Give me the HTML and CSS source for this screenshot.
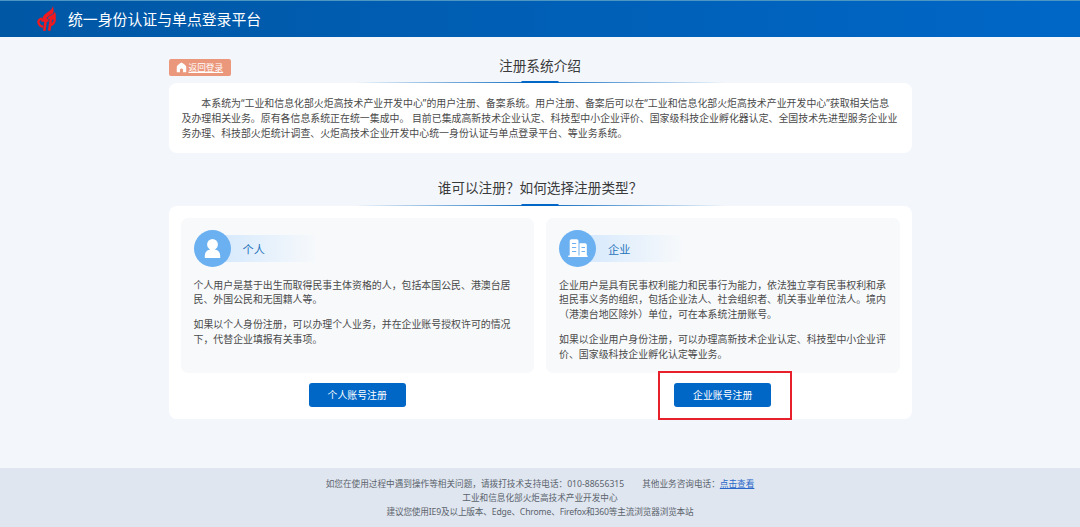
FILE: index.html
```
<!DOCTYPE html>
<html lang="zh-CN">

<head>
  <meta charset="UTF-8">
  <meta name="viewport" content="width=device-width, initial-scale=1.0">
  <title>统一身份认证与单点登录平台</title>
  <link rel="stylesheet" href="styles.css">
</head>

<body>
  <header class="header">
    <svg class="logo" viewBox="0 0 20 26">
      <path fill="#f0191f" d="M15.800 0C15.500 3.500 11.500 5.500 8.500 7.800C6.500 9.400 5.600 11 5.800 13H9.500C10 10.800 13 9.300 16 7.600C16.900 5.500 16.800 2.500 15.800 0Z" />
      <path fill="#f0191f" d="M17.800 5.500C17.300 8.200 14 9.300 11.500 10.800L10.500 13H18.300C19.300 10.500 19 8 17.800 5.500Z" />
      <path fill="none" stroke="#f0191f" stroke-width="2.400" d="M5.500 12.600C2.600 12.400 .9 14.800 1.600 17C2.200 19 4 20.500 6 20.700" />
      <path fill="none" stroke="#f0191f" stroke-width="2.600" d="M4.300 14.400H11.500M8.800 13.500L7.300 24.800M14 12.500L12.200 24.800" />
      <path fill="none" stroke="#f0191f" stroke-width="2.400" d="M13.500 12.800C16.800 12 18.300 12 17.500 15C16.800 17.500 15 18.800 13 19.200" />
    </svg>
    <h1>统一身份认证与单点登录平台</h1>
  </header>

  <main class="main">
    <div class="title">
      <a class="back" href="#">
        <svg viewBox="0 0 10 10">
          <path fill="#fff" d="M5 .4Q.7 3 .7 4.500V9.400H3.600V6.800Q5 5.200 6.400 6.800V9.400H9.300V4.500Q9.300 3 5 .4Z" />
        </svg>
        <span>返回登录</span>
      </a>
      <h2>注册系统介绍</h2>
    </div>
    <div class="intro">
      <p>本系统为“工业和信息化部火炬高技术产业开发中心”的用户注册、备案系统。用户注册、备案后可以在“工业和信息化部火炬高技术产业开发中心”获取相关信息<br>及办理相关业务。原有各信息系统正在统一集成中。 目前已集成高新技术企业认定、科技型中小企业评价、国家级科技企业孵化器认定、全国技术先进型服务企业业<br>务办理、科技部火炬统计调查、火炬高技术企业开发中心统一身份认证与单点登录平台、等业务系统。</p>
    </div>

    <div class="title">
      <h2>谁可以注册？如何选择注册类型？</h2>
    </div>
    <div class="types">
      <div class="type">
        <div class="card">
          <div class="card-head">
            <div class="icon">
              <svg viewBox="0 0 37 37">
                <circle cx="18.500" cy="14.400" r="5.400" fill="#fff" />
                <path fill="#fff" d="M16 18H21V19.600C24.500 20.400 26.200 22.500 26.200 26V28H10.800V26C10.800 22.500 12.500 20.400 16 19.600Z" />
              </svg>
            </div>
            <h3>个人</h3>
          </div>
          <p>个人用户是基于出生而取得民事主体资格的人，包括本国公民、港澳台居<br>民、外国公民和无国籍人等。</p>
          <p>如果以个人身份注册，可以办理个人业务，并在企业账号授权许可的情况<br>下，代替企业填报有关事项。</p>
        </div>
        <button class="btn">个人账号注册</button>
      </div>
      <div class="type">
        <div class="card">
          <div class="card-head">
            <div class="icon">
              <svg viewBox="0 0 37 37">
                <path fill="#fff" d="M10.700 25.500V11Q10.700 9.300 12.500 9.300H17.700Q19.500 9.300 19.500 11V25.500H20.500V13.300H26Q27.800 13.300 27.800 15V25.500H28.600V27H9.300V25.500Z" />
                <path stroke="#6bb0f0" stroke-width="1.200" d="M13 13.500H17.200M13 17.500H17.200M13 21.500H17.200M22.500 17.500H26M22.500 21.500H26" />
              </svg>
            </div>
            <h3>企业</h3>
          </div>
          <p>企业用户是具有民事权利能力和民事行为能力，依法独立享有民事权利和承<br>担民事义务的组织，包括企业法人、社会组织者、机关事业单位法人。境内<br>（港澳台地区除外）单位，可在本系统注册账号。</p>
          <p>如果以企业用户身份注册，可以办理高新技术企业认定、科技型中小企业评<br>价、国家级科技企业孵化认定等业务。</p>
        </div>
        <div class="btn-box">
          <button class="btn">企业账号注册</button>
          <span class="mark"></span>
        </div>
      </div>
    </div>
  </main>

  <footer class="footer">
    <p>如您在使用过程中遇到操作等相关问题，请拨打技术支持电话：010-88656315<span class="other">其他业务咨询电话：<a href="#">点击查看</a></span></p>
    <p>工业和信息化部火炬高技术产业开发中心</p>
    <p class="browser">建议您使用IE9及以上版本、Edge、Chrome、Firefox和360等主流浏览器浏览本站</p>
  </footer>
</body>

</html>
```

FILE: styles.css
```
* {
  box-sizing: border-box;
  margin: 0;
  padding: 0;
}

body {
  height: 527px;
  display: flex;
  flex-direction: column;
  overflow: hidden;
  background-color: #f3f7fc;
  color: #4a4a4a;
  font-family: "Noto Sans", "Noto Sans CJK SC", sans-serif;
  font-size: 9.92px;
  line-height: 14.85px;
}

.header {
  height: 37px;
  flex: none;
  display: flex;
  align-items: center;
  padding: 1px 0 0 37px;
  border-top: 1px solid #4c96c4;
  background: linear-gradient(to right, #0057a4, #0067c7);
}

.logo {
  width: 20px;
  height: 26px;
  margin-bottom: 1px;
}

.header h1 {
  margin-left: 11px;
  color: #fff;
  font-size: 14.87px;
  font-weight: 400;
  white-space: nowrap;
}

.main {
  width: 743px;
  margin: 0 auto;
  flex: 1;
}

.title {
  position: relative;
  height: 46px;
  padding-top: 19px;
  text-align: center;
}

.title h2 {
  color: #3a3a3a;
  font-size: 13.65px;
  font-weight: 400;
  line-height: 20px;
}

/* 标题下的渐变线 */
.title::before,
.title::after {
  content: "";
  position: absolute;
  left: 50%;
  transform: translateX(-50%);
}

.title::before {
  bottom: 0;
  width: 371px;
  height: 1px;
  background: linear-gradient(to right, transparent, #1c74c4 45%, #1c74c4 55%, transparent);
}

.title::after {
  bottom: 0;
  width: 37px;
  height: 2px;
  background-color: #0067c7;
}

.back {
  position: absolute;
  left: 0;
  top: 22px;
  width: 62px;
  height: 17px;
  display: flex;
  align-items: center;
  gap: 2px;
  padding-left: 7px;
  border-radius: 2px;
  background-color: #eb977b;
  color: #fff;
  font-size: 8.66px;
  line-height: 17px;
}

.back svg {
  width: 11px;
  height: 11px;
}

.back span {
  padding-top: 1px;
}

.intro {
  height: 70px;
  padding: 13px 12px 0 13px;
  border-radius: 8px;
  background-color: #fff;
  white-space: nowrap;
}

.intro p {
  text-indent: 2em;
}

.intro + .title {
  height: 53px;
  padding-top: 25px;
}

.types {
  height: 213px;
  display: flex;
  gap: 12px;
  padding: 12px;
  border-radius: 8px;
  background-color: #fff;
}

.type {
  flex: 1;
  display: flex;
  flex-direction: column;
  align-items: center;
  gap: 10px;
}

.card {
  width: 100%;
  height: 156px;
  padding: 12px 12px 0 13px;
  border-radius: 7px;
  background-color: #f7f9fb;
  white-space: nowrap;
}

.card p {
  margin-bottom: 9.8px;
}

.card-head {
  height: 37px;
  display: flex;
  align-items: center;
  margin-bottom: 10.5px;
}

.icon {
  z-index: 1;
  width: 37px;
  height: 37px;
  border-radius: 50%;
  background-color: #6bb0f0;
}

.icon svg {
  display: block;
}

.card-head h3 {
  width: 110px;
  height: 27px;
  margin-left: -18px;
  padding: 1px 0 0 30px;
  background: linear-gradient(to right, #d4e8fd, #f7f9fb 95%);
  color: #2774bb;
  font-size: 11.2px;
  font-weight: 400;
  line-height: 27px;
}

.btn {
  width: 97px;
  height: 24px;
  display: block;
  border: none;
  border-radius: 3px;
  background-color: #0067c7;
  color: #fff;
  font-family: inherit;
  font-size: 9.9px;
}

.btn-box {
  position: relative;
}

/* 红色标注框 */
.mark {
  position: absolute;
  left: -16px;
  top: -12px;
  width: 134px;
  height: 49px;
  border: 2px solid #e8202c;
}

.footer {
  height: 59px;
  flex: none;
  padding-top: 10px;
  background-color: #dfe6f0;
  color: #5b636c;
  font-size: 8.65px;
  line-height: 13.8px;
  text-align: center;
}

.other {
  margin-left: 18px;
}

.browser {
  letter-spacing: -0.16px;
}

.footer a {
  color: #2a66c8;
}
```
